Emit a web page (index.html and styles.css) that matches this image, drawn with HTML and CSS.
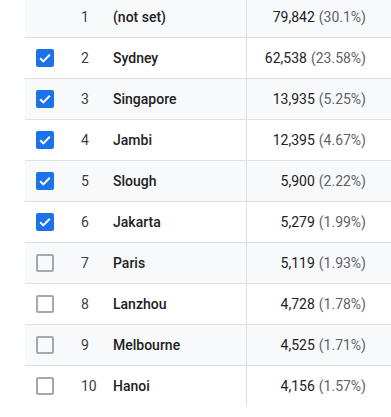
FILE: index.html
```html
<!DOCTYPE html>
<html>
<head>
<meta charset="utf-8">
<link rel="stylesheet" href="styles.css">
</head>
<body>
<div class="table">
  <div class="row alt">
    <div class="cell check"></div>
    <div class="cell idx">1</div>
    <div class="cell name">(not set)</div>
    <div class="cell val">79,842 <span class="pct">(30.1%)</span></div>
  </div>
  <div class="row">
    <div class="cell check"><span class="box on"><svg viewBox="0 0 18 18" width="18" height="18"><path d="M4.2 9.3l3.1 3.1 6.5-6.6" fill="none" stroke="#fff" stroke-width="2"/></svg></span></div>
    <div class="cell idx">2</div>
    <div class="cell name">Sydney</div>
    <div class="cell val">62,538 <span class="pct">(23.58%)</span></div>
  </div>
  <div class="row alt">
    <div class="cell check"><span class="box on"><svg viewBox="0 0 18 18" width="18" height="18"><path d="M4.2 9.3l3.1 3.1 6.5-6.6" fill="none" stroke="#fff" stroke-width="2"/></svg></span></div>
    <div class="cell idx">3</div>
    <div class="cell name">Singapore</div>
    <div class="cell val">13,935 <span class="pct">(5.25%)</span></div>
  </div>
  <div class="row">
    <div class="cell check"><span class="box on"><svg viewBox="0 0 18 18" width="18" height="18"><path d="M4.2 9.3l3.1 3.1 6.5-6.6" fill="none" stroke="#fff" stroke-width="2"/></svg></span></div>
    <div class="cell idx">4</div>
    <div class="cell name">Jambi</div>
    <div class="cell val">12,395 <span class="pct">(4.67%)</span></div>
  </div>
  <div class="row alt">
    <div class="cell check"><span class="box on"><svg viewBox="0 0 18 18" width="18" height="18"><path d="M4.2 9.3l3.1 3.1 6.5-6.6" fill="none" stroke="#fff" stroke-width="2"/></svg></span></div>
    <div class="cell idx">5</div>
    <div class="cell name">Slough</div>
    <div class="cell val">5,900 <span class="pct">(2.22%)</span></div>
  </div>
  <div class="row">
    <div class="cell check"><span class="box on"><svg viewBox="0 0 18 18" width="18" height="18"><path d="M4.2 9.3l3.1 3.1 6.5-6.6" fill="none" stroke="#fff" stroke-width="2"/></svg></span></div>
    <div class="cell idx">6</div>
    <div class="cell name">Jakarta</div>
    <div class="cell val">5,279 <span class="pct">(1.99%)</span></div>
  </div>
  <div class="row alt">
    <div class="cell check"><span class="box"></span></div>
    <div class="cell idx">7</div>
    <div class="cell name">Paris</div>
    <div class="cell val">5,119 <span class="pct">(1.93%)</span></div>
  </div>
  <div class="row">
    <div class="cell check"><span class="box"></span></div>
    <div class="cell idx">8</div>
    <div class="cell name">Lanzhou</div>
    <div class="cell val">4,728 <span class="pct">(1.78%)</span></div>
  </div>
  <div class="row alt">
    <div class="cell check"><span class="box"></span></div>
    <div class="cell idx">9</div>
    <div class="cell name">Melbourne</div>
    <div class="cell val">4,525 <span class="pct">(1.71%)</span></div>
  </div>
  <div class="row last">
    <div class="cell check"><span class="box"></span></div>
    <div class="cell idx">10</div>
    <div class="cell name">Hanoi</div>
    <div class="cell val">4,156 <span class="pct">(1.57%)</span></div>
  </div>
</div>
</body>
</html>
```
FILE: styles.css
```css
html, body {
  margin: 0;
  padding: 0;
  background: #fff;
}
body {
  font-family: Roboto, "Liberation Sans", sans-serif;
  font-size: 14px;
  color: #202124;
  overflow: hidden;
}
.table {
  margin: -3px 0 0 25px;
  display: flex;
  flex-direction: column;
}
.row {
  display: grid;
  grid-template-columns: 56px 32px 133px 1fr;
  height: 40px;
  border-bottom: 1px solid #e0e0e0;
  background: #fff;
}
.row.alt {
  background: #f8f9fa;
}
.row.last {
  border-bottom: none;
}
.cell {
  display: flex;
  align-items: center;
  white-space: nowrap;
}
.check {
  padding-left: 11px;
}
.idx {
  color: #3c4043;
}
.name {
  font-weight: 500;
  color: #202124;
}
.val {
  justify-content: flex-end;
  padding-right: 25px;
  border-left: 1px solid #e0e0e0;
  color: #202124;
}
.pct {
  color: #5f6368;
  margin-left: 4px;
}
.box {
  width: 18px;
  height: 18px;
  box-sizing: border-box;
  border: 2px solid #a8a8a8;
  border-radius: 2px;
  display: block;
}
.box.on {
  border: none;
  background: #1a73e8;
  border-radius: 2px;
}
.box svg {
  display: block;
}
```
